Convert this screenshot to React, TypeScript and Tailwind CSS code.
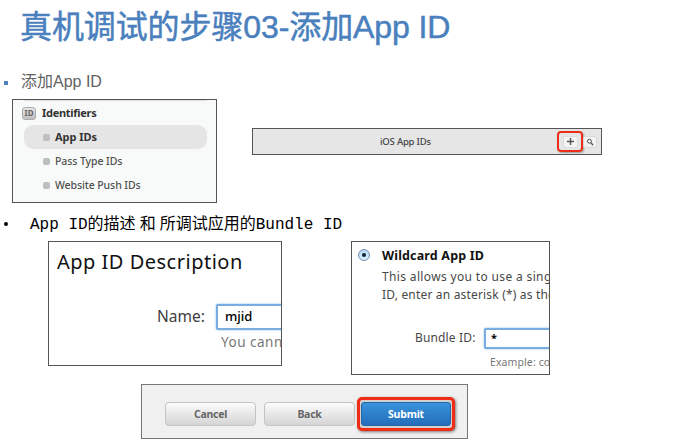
import type { ReactNode } from 'react';

const ui = "font-['Noto_Sans','Open_Sans',sans-serif]";

function SideItem({ label, active = false }: { label: string; active?: boolean }) {
  return (
    <li
      className={`flex h-6 items-center gap-[5px] rounded-[9px] pl-[19px] whitespace-nowrap ${
        active ? 'bg-[#e5e5e5] text-[11px] font-bold text-[#333]' : 'text-[10.5px] font-medium text-[#505050]'
      }`}
    >
      <span className="size-[7px] shrink-0 rounded-[2px] bg-[#bdbec1]" />
      <span className={active ? 'tracking-[-0.05px]' : 'pt-[2px] tracking-[-0.08px]'}>{label}</span>
    </li>
  );
}

function Sidebar() {
  return (
    <section className="h-[104px] w-[205px] shrink-0 border border-[#555] bg-[#f8faf9] pl-[11px] pr-[9px]">
      <div className="h-px bg-[#dedede]" />
      <h2 className="flex h-[24px] items-center gap-[5px] text-[11px] font-bold text-[#333]">
        <span className="ml-[-2px] flex h-[13px] w-[14px] items-center justify-center rounded-[3px] border border-[#aaa] bg-linear-to-b from-[#e8e8e8] to-[#bfbfbf] text-[8px] text-[#666]">
          ID
        </span>
        <span className="ml-px tracking-[-0.28px]">Identifiers</span>
      </h2>
      <ul>
        <SideItem label="App IDs" active />
        <SideItem label="Pass Type IDs" />
        <SideItem label="Website Push IDs" />
      </ul>
    </section>
  );
}

function Toolbar() {
  return (
    <section className="mt-[29px] flex h-[27px] w-[350px] items-center border border-[#555] bg-[#e6e6e6] text-[#444]">
      <span className="ml-[127px] w-[177px] shrink-0 whitespace-nowrap pt-[2px] text-[9.5px] font-medium tracking-[-0.2px]">iOS App IDs</span>
      <span className="flex h-[21px] w-[26px] shrink-0 items-center justify-center rounded-[4px] border-2 border-[#ee2d18] shadow-[1px_1px_2px_#999]">
        <span className="flex h-[12px] w-[15px] items-center justify-center rounded-[2px] border border-[#ddd] bg-[#f4f4f4]">
          <svg viewBox="0 0 7 7" className="size-[7px] shrink-0" stroke="#555" strokeWidth="1.4">
            <path d="M3.5 0v7M0 3.5h7" />
          </svg>
        </span>
      </span>
      <span className="flex h-[12px] w-[14px] shrink-0 items-center justify-center rounded-[2px] border border-[#dadada] bg-[#f2f2f2]">
        <svg viewBox="0 0 8 8" className="size-[8px] shrink-0" fill="none" stroke="#555" strokeWidth="1">
          <circle cx="3.4" cy="3.2" r="2" />
          <path d="M4.9 4.8 7.1 7.2" strokeWidth="1.3" />
        </svg>
      </span>
    </section>
  );
}

function DescriptionForm() {
  return (
    <section className="h-[125px] w-[234px] shrink-0 overflow-hidden border border-[#555] bg-white whitespace-nowrap">
      <h2 className="ml-[8px] mt-[6px] h-[28px] text-[20px] leading-[28px] tracking-[0.5px] text-[#111]">App ID Description</h2>
      <div className="mt-[27px] flex h-[28px] items-center">
        <label className="ml-[108px] w-[59px] shrink-0 text-[15.5px] text-[#3d3d3d]">Name:</label>
        <div className="flex h-[26px] w-[90px] shrink-0 items-center rounded-[2px] border-2 border-[#79addf] bg-white pl-[7px] text-[13px] font-medium text-black shadow-[0_0_2px_#79addf]">
          mjid
        </div>
      </div>
      <p className="ml-[172px] text-[13.5px] leading-[23px] tracking-[0.5px] text-[#777]">You cannot use special characters</p>
    </section>
  );
}

function WildcardForm() {
  return (
    <section className="ml-[69px] h-[134px] w-[199px] shrink-0 overflow-hidden border border-[#555] bg-white whitespace-nowrap">
      <div className="mt-[3px] flex h-[21px] items-center">
        <span className="mb-[2px] ml-[6px] flex size-[12px] shrink-0 items-center justify-center rounded-full border border-[#7890ab] bg-linear-to-b from-[#b9d7f4] to-[#d5f0ff]">
          <span className="size-[4px] rounded-full bg-[#102238]" />
        </span>
        <h2 className="ml-[12px] pt-px text-[12.5px] font-bold tracking-[0.16px] text-[#111]">Wildcard App ID</h2>
      </div>
      <p className="ml-[30px] mt-[2px] text-[12px] leading-[18px] text-[#484848]">
        <span className="tracking-[0.35px]">This allows you to use a single App</span>
        <br />
        <span className="tracking-[0.18px]">ID, enter an asterisk (*) as the last</span>
      </p>
      <div className="mt-[23px] flex h-[22px] items-center">
        <label className="ml-[63px] w-[69px] shrink-0 text-[12px] leading-[16px] tracking-[0.15px] text-[#484848]">Bundle ID:</label>
        <div className="flex h-[21px] w-[90px] shrink-0 items-center rounded-[2px] border-2 border-[#79addf] bg-white pl-[5px] text-[11px] font-bold text-black shadow-[0_0_2px_#79addf]">
          *
        </div>
      </div>
      <p className="ml-[138px] mt-[4px] text-[10.5px] leading-[18px] tracking-[0.1px] text-[#777]">Example: com.domainname.*</p>
    </section>
  );
}

function GrayButton({ children }: { children: ReactNode }) {
  return (
    <button className="flex h-[24px] w-[91px] shrink-0 items-center justify-center rounded-[4px] border border-[#c3c3c3] bg-linear-to-b from-[#fbfbfb] to-[#d5d5d5] pt-px text-[10.5px] font-bold tracking-[-0.25px] text-[#666]">
      {children}
    </button>
  );
}

function ButtonBar() {
  return (
    <section className="ml-[141px] mt-[8px] flex h-[55px] w-[327px] shrink-0 items-center border border-[#777] bg-[#f0f0f0] pt-[5px] pl-[23px]">
      <GrayButton>Cancel</GrayButton>
      <span className="w-[8px] shrink-0" />
      <GrayButton>Back</GrayButton>
      <span className="ml-[2px] flex h-[34px] w-[98px] shrink-0 items-center justify-center rounded-[5px] border-3 border-[#f02b16] bg-[#d3d0ce] shadow-[1px_1px_3px_#777]">
        <button className="h-[24px] w-[90px] rounded-[3px] border border-[#2567a5] bg-linear-to-b from-[#3993dc] to-[#246dbb] pt-px text-[10.5px] font-bold tracking-[-0.2px] text-white">
          Submit
        </button>
      </span>
    </section>
  );
}

export default function App() {
  return (
    <main className="flex h-[439px] w-[673px] flex-col overflow-hidden bg-white">
      <h1 className="ml-[20px] h-[54px] whitespace-nowrap font-['Liberation_Sans','Noto_Sans_CJK_SC',sans-serif] text-[32px] leading-[54px] tracking-[-0.1px] text-[#4a80bd] [-webkit-text-stroke:0.5px_#4a80bd]">
        真机调试的步骤03-添加App ID
      </h1>
      <div className="mt-[16px] flex h-[24px] items-center pl-[4px]">
        <span className="mt-[2px] size-[4px] bg-[#4f81bd]" />
        <p className="ml-[13px] whitespace-nowrap font-['Liberation_Sans','Noto_Sans_CJK_SC',sans-serif] text-[16px] text-[#626262]">添加App ID</p>
      </div>
      <div className={`${ui} mt-[5px] flex h-[104px] gap-[35px] pl-[12px]`}>
        <Sidebar />
        <Toolbar />
      </div>
      <div className="mt-[10px] flex h-[24px] items-center pl-[4px] text-black">
        <span className="mb-[3px] size-[4px] rounded-full bg-black" />
        <p className="ml-[22px] whitespace-nowrap font-['Liberation_Mono','Noto_Sans_CJK_SC',monospace] text-[16px] leading-6">
          App ID的描述<span className="tracking-[-5.6px]"> </span>和<span className="tracking-[-5.6px]"> </span>所调试应用的Bundle ID
        </p>
      </div>
      <div className={`${ui} mt-[4px] flex h-[135px] pl-[48px]`}>
        <DescriptionForm />
        <WildcardForm />
      </div>
      <div className={ui}>
        <ButtonBar />
      </div>
    </main>
  );
}
